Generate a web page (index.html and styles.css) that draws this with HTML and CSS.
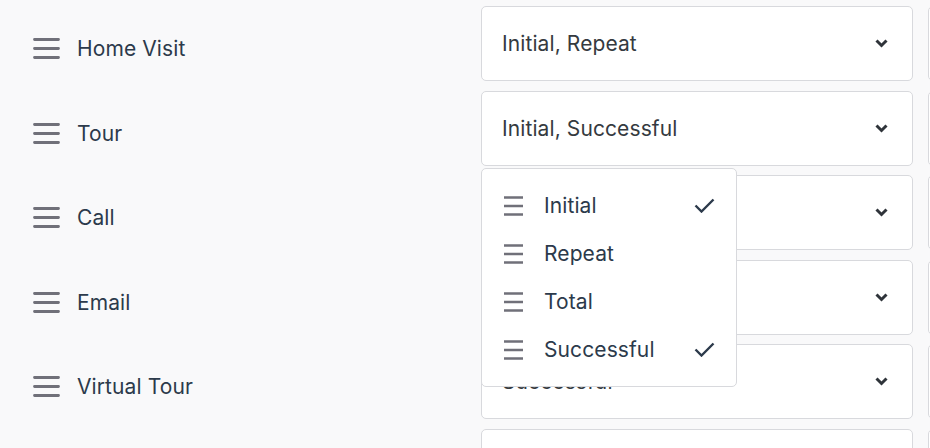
FILE: index.html
```html
<!doctype html>
<html lang="en">
  <head>
    <meta charset="UTF-8" />
    <meta name="viewport" content="width=device-width, initial-scale=1.0" />
    <title>Activity Types</title>
    <link rel="stylesheet" href="styles.css">
  </head>
  <body>
    <div class="settings">

      <!-- Home Visit -->
      <div class="row">
        <div class="label">
          <svg class="grip" viewBox="0 0 27 21"><path d="M1.5 1.5h24M1.5 10.5h24M1.5 19.5h24" /></svg>
          <span>Home Visit</span>
        </div>
        <div class="select">
          <span class="value">Initial, Repeat</span>
          <svg class="chevron" viewBox="0 0 13 9"><path d="M1.5 1.5l5 5 5-5" /></svg>
        </div>
        <div class="select"></div>
      </div>

      <!-- Tour -->
      <div class="row">
        <div class="label">
          <svg class="grip" viewBox="0 0 27 21"><path d="M1.5 1.5h24M1.5 10.5h24M1.5 19.5h24" /></svg>
          <span>Tour</span>
        </div>
        <div class="select open">
          <span class="value">Initial, Successful</span>
          <svg class="chevron" viewBox="0 0 13 9"><path d="M1.5 1.5l5 5 5-5" /></svg>

          <ul class="menu">
            <li class="option">
              <svg class="grip small" viewBox="0 0 19 22"><path d="M0 2.5h19M0 11h19M0 19.5h19" /></svg>
              <span>Initial</span>
              <svg class="check" viewBox="0 0 21 15"><path d="M1.5 7.5l6 6 12-12" /></svg>
            </li>
            <li class="option">
              <svg class="grip small" viewBox="0 0 19 22"><path d="M0 2.5h19M0 11h19M0 19.5h19" /></svg>
              <span>Repeat</span>
            </li>
            <li class="option">
              <svg class="grip small" viewBox="0 0 19 22"><path d="M0 2.5h19M0 11h19M0 19.5h19" /></svg>
              <span>Total</span>
            </li>
            <li class="option">
              <svg class="grip small" viewBox="0 0 19 22"><path d="M0 2.5h19M0 11h19M0 19.5h19" /></svg>
              <span>Successful</span>
              <svg class="check" viewBox="0 0 21 15"><path d="M1.5 7.5l6 6 12-12" /></svg>
            </li>
          </ul>
        </div>
        <div class="select"></div>
      </div>

      <!-- Call -->
      <div class="row">
        <div class="label">
          <svg class="grip" viewBox="0 0 27 21"><path d="M1.5 1.5h24M1.5 10.5h24M1.5 19.5h24" /></svg>
          <span>Call</span>
        </div>
        <div class="select">
          <span class="value"></span>
          <svg class="chevron" viewBox="0 0 13 9"><path d="M1.5 1.5l5 5 5-5" /></svg>
        </div>
        <div class="select"></div>
      </div>

      <!-- Email -->
      <div class="row">
        <div class="label">
          <svg class="grip" viewBox="0 0 27 21"><path d="M1.5 1.5h24M1.5 10.5h24M1.5 19.5h24" /></svg>
          <span>Email</span>
        </div>
        <div class="select">
          <span class="value"></span>
          <svg class="chevron" viewBox="0 0 13 9"><path d="M1.5 1.5l5 5 5-5" /></svg>
        </div>
        <div class="select"></div>
      </div>

      <!-- Virtual Tour -->
      <div class="row">
        <div class="label">
          <svg class="grip" viewBox="0 0 27 21"><path d="M1.5 1.5h24M1.5 10.5h24M1.5 19.5h24" /></svg>
          <span>Virtual Tour</span>
        </div>
        <div class="select">
          <span class="value">Successful</span>
          <svg class="chevron" viewBox="0 0 13 9"><path d="M1.5 1.5l5 5 5-5" /></svg>
        </div>
        <div class="select"></div>
      </div>

      <!-- next row, below the fold -->
      <div class="row">
        <div class="label"></div>
        <div class="select"></div>
        <div class="select"></div>
      </div>

    </div>
  </body>
</html>
```

FILE: styles.css
```css
* {
  margin: 0;
  padding: 0;
  box-sizing: border-box;
}
html,
body {
  height: 100%;
  overflow: hidden;
}
body {
  font-family: Inter, "Open Sans", sans-serif;
  font-size: 21px;
  letter-spacing: 0.1px;
  color: #2c3a4b;
  background: #f9f9fa;
}
.settings {
  display: flex;
  flex-direction: column;
  gap: 9.5px;
  padding-top: 6px;
}
.row {
  display: grid;
  grid-template-columns: 466px 432px 432px;
  column-gap: 15px;
  height: 75px;
}
.label {
  display: flex;
  align-items: center;
  gap: 17px;
  padding-left: 33px;
  padding-top: 10px;
}
.grip {
  width: 27px;
  height: 21px;
  flex: none;
  fill: none;
  stroke: #707079;
  stroke-width: 2.8;
  stroke-linecap: round;
}
.grip.small {
  width: 19px;
  height: 22px;
  stroke-width: 2.4;
  stroke-linecap: butt;
}
.select {
  position: relative;
  display: flex;
  align-items: center;
  justify-content: space-between;
  padding: 0 24px 0 20px;
  background: #fff;
  border: 1px solid #d8d9dd;
  border-radius: 5px;
  color: #353a40;
}
.chevron {
  width: 13px;
  height: 9px;
  fill: none;
  stroke: #2f343a;
  stroke-width: 3;
}
.menu {
  position: absolute;
  top: calc(100% + 3px);
  left: -1px;
  z-index: 2;
  width: 256px;
  padding: 13px 0 12px;
  list-style: none;
  background: #fff;
  border: 1px solid #d8d9dd;
  border-radius: 5px;
  color: #2c3a4b;
}
.option {
  display: flex;
  align-items: center;
  height: 48px;
  padding: 0 21px 0 22px;
}
.option span {
  flex: 1;
  margin-left: 21px;
}
.check {
  width: 21px;
  height: 15px;
  fill: none;
  stroke: #2c3a4b;
  stroke-width: 2.4;
}
```
